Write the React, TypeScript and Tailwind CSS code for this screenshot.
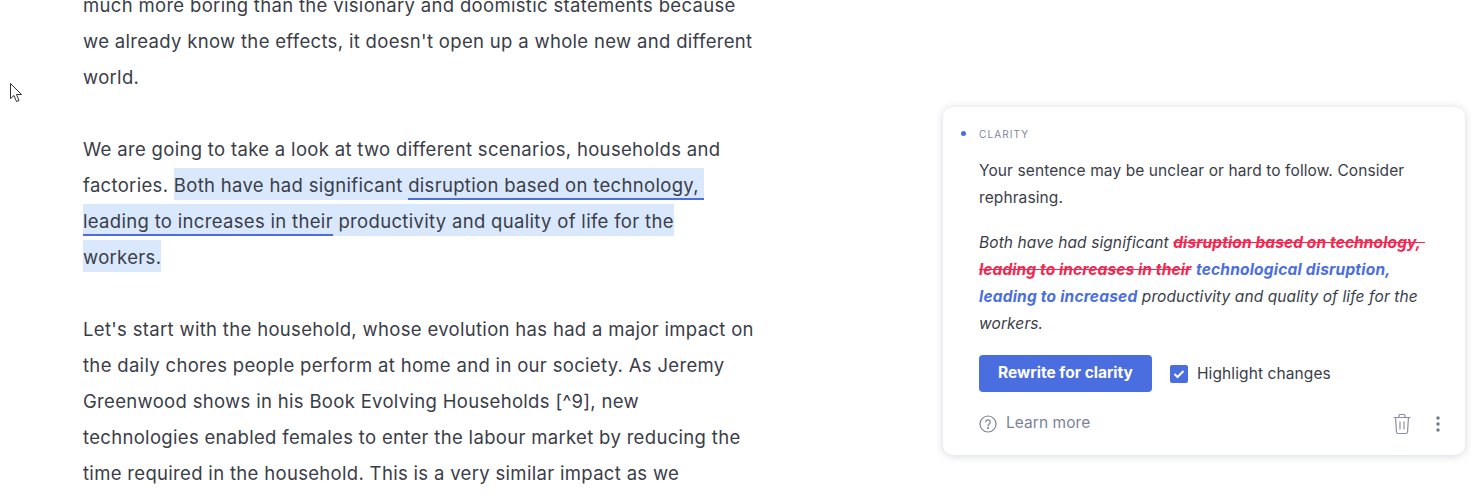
import React from "react";

const font = { fontFamily: "Inter, 'Noto Sans', sans-serif" };

function Mark({ children, line }: { children: React.ReactNode; line?: boolean }) {
  return (
    <span className={line ? "bg-[#d9e8fd] pt-[6px] border-b-2 border-[#4a6ee0] pb-[2px]" : "bg-[#d9e8fd] pt-[6px] pb-[4px]"}>{children}</span>
  );
}

function Del({ children }: { children: React.ReactNode }) {
  return <span className="font-bold text-[#f5264f] line-through">{children}</span>;
}

function Ins({ children }: { children: React.ReactNode }) {
  return <span className="font-bold tracking-[0.2px] text-[#4a6ee0]">{children}</span>;
}

export default function App() {
  return (
    <div className="relative h-[500px] w-[1477px] overflow-hidden bg-white" style={font}>
      <svg className="absolute left-[9px] top-[82px]" width="15" height="22" viewBox="0 0 15 22">
        <path d="M1.500 1.500V16.500L5 13.500L7.500 19.500L10 18.500L7.500 12.500H12.500Z" fill="#fff" stroke="#333" strokeWidth="1" />
      </svg>
      <div className="flex">
        <div className="ml-[83px] mt-[-13px] w-[690px] shrink-0 text-[18.5px] leading-[36px] tracking-[0.32px] text-[#3a3d48]">
          <p>
            much more boring than the visionary and doomistic statements because
            <br />
            we already know the effects, it doesn't open up a whole new and different
            <br />
            world.
          </p>
          <p className="mt-[36px]">
            We are going to take a look at two different scenarios, households and
            <br />
            factories. <Mark>Both have had significant </Mark>
            <Mark line>disruption based on technology,{"\u00a0"}</Mark>
            <br />
            <Mark line>leading to increases in their</Mark>
            <Mark> productivity and quality of life for the</Mark>
            <br />
            <Mark>workers.</Mark>
          </p>
          <p className="mt-[36px]">
            Let's start with the household, whose evolution has had a major impact on
            <br />
            the daily chores people perform at home and in our society. As Jeremy
            <br />
            Greenwood shows in his Book Evolving Households [^9], new
            <br />
            technologies enabled females to enter the labour market by reducing the
            <br />
            time required in the household. This is a very similar impact as we
          </p>
        </div>
        <div className="ml-[170px] mt-[107px] h-[348px] w-[522px] shrink-0 rounded-[10px] bg-white pl-[36px] pr-[24px] pt-[19px] shadow-[0_1px_8px_rgba(40,50,80,0.2)]">
          <div className="relative flex h-[16px] items-center">
            <span className="absolute left-[-18px] top-[5px] h-[5px] w-[5px] rounded-full bg-[#4a6ee0]" />
            <span className="text-[10px] tracking-[1.1px] text-[#7f84a0]">CLARITY</span>
          </div>
          <p className="mt-[15px] text-[15.5px] leading-[27px] tracking-[0.1px] text-[#3a3d48]">
            Your sentence may be unclear or hard to follow. Consider
            <br />
            rephrasing.
          </p>
          <p className="mt-[18px] text-[15.5px] italic leading-[27px] tracking-[0.1px] text-[#3a3d48]">
            Both have had significant <Del>disruption based on technology,{"\u00a0"}</Del>
            <br />
            <Del>leading to increases in their</Del> <Ins>technological disruption,</Ins>
            <br />
            <Ins>leading to increased</Ins> productivity and quality of life for the
            <br />
            workers.
          </p>
          <div className="mt-[18px] flex items-center">
            <button className="h-[37px] w-[173px] rounded-[4px] bg-[#4a6ee0] pb-[2px] text-[15.5px] font-bold text-white">
              Rewrite for clarity
            </button>
            <span className="ml-[18px] flex h-[18px] w-[18px] items-center justify-center rounded-[2px] bg-[#4a6ee0]">
              <svg width="12" height="10" viewBox="0 0 12 10" fill="none">
                <path d="M1.500 5L4.500 8L10.500 2" stroke="#fff" strokeWidth="2" />
              </svg>
            </span>
            <span className="ml-[9px] text-[15.5px] tracking-[0.1px] text-[#3a3d48]">Highlight changes</span>
          </div>
          <div className="mt-[19px] flex items-center">
            <svg width="18" height="18" viewBox="0 0 18 18" fill="none" stroke="#7d8299" strokeWidth="1.200">
              <circle cx="9" cy="9" r="8" />
              <path d="M6.800 7a2.200 2.200 0 1 1 3.400 1.900c-.8.5-1.200 1-1.200 1.900" strokeLinecap="round" />
              <circle cx="9" cy="13" r="0.500" fill="#7d8299" />
            </svg>
            <span className="ml-[9px] pb-[2px] text-[15.5px] tracking-[0.05px] text-[#7d8299]">Learn more</span>
            <svg className="ml-auto" width="20" height="22" viewBox="0 0 20 22" fill="none" stroke="#8a90a8" strokeWidth="1.200">
              <path d="M1.500 4.500H18.500M7 4.500V2.500C7 1.900 7.500 1.500 8 1.500H12C12.500 1.500 13 1.900 13 2.500V4.500" />
              <path d="M3.500 4.500L4.500 19C4.600 20 5.200 20.500 6 20.500H14C14.800 20.500 15.400 20 15.500 19L16.500 4.500" />
              <path d="M8 8.500V16.500M12 8.500V16.500" />
            </svg>
            <svg className="ml-[24px] mr-[1px]" width="4" height="18" viewBox="0 0 4 18" fill="#6f7590">
              <circle cx="2" cy="3" r="1.700" />
              <circle cx="2" cy="9" r="1.700" />
              <circle cx="2" cy="15" r="1.700" />
            </svg>
          </div>
        </div>
      </div>
    </div>
  );
}
